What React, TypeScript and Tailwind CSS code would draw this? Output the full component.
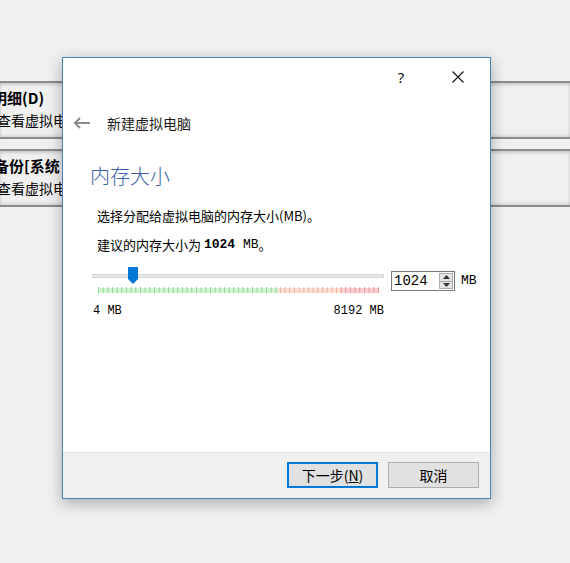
import React from 'react';

const cjk = '"Noto Sans CJK SC", "Noto Sans", sans-serif';
const mono = '"Liberation Mono", "Noto Sans CJK SC", monospace';

function Ticks() {
  const ticks = [];
  const start = 98;
  const end = 378;
  const count = 60;
  for (let i = 0; i <= count; i++) {
    const x = start + ((end - start) * i) / count - 91;
    const color = x + 91 < 278 ? '#8fd68f' : x + 91 < 340 ? '#eeb3a0' : '#e89a9a';
    ticks.push(<line key={i} x1={x + 0.5} y1={22} x2={x + 0.5} y2={28} stroke={color} strokeWidth={1} />);
  }
  return <>{ticks}</>;
}

function MemorySlider() {
  return (
    <svg width="294" height="30" viewBox="0 0 294 30">
      <rect x="1.5" y="9.5" width="291" height="3" fill="#e7e7e7" stroke="#d6d6d6" />
      <rect x="7" y="23" width="180" height="5" fill="#d4f5d4" />
      <rect x="187" y="23" width="62" height="5" fill="#fde0d4" />
      <rect x="249" y="23" width="38" height="5" fill="#fbcfcf" />
      <Ticks />
      <path d="M37 2 H47 V14 L42 19 L37 14 Z" fill="#0078d7" />
    </svg>
  );
}

function BackgroundCard({ title, titleOffset }: { title: string; titleOffset: string }) {
  return (
    <div className="h-[58px] border-y-2 border-[#8c8c8c] bg-[#f0f0f0] shadow-[inset_0_2px_3px_rgba(0,0,0,0.15),inset_0_-2px_3px_rgba(0,0,0,0.1)] overflow-hidden">
      <div className={`mt-[6px] whitespace-nowrap text-[15px] font-bold leading-[18px] text-black ${titleOffset}`} style={{ fontFamily: cjk }}>
        {title}
      </div>
      <div className="mt-[4px] ml-[-3px] whitespace-nowrap text-[14px] leading-[18px] text-black" style={{ fontFamily: cjk }}>
        查看虚拟电
      </div>
    </div>
  );
}

export default function App() {
  return (
    <div className="relative w-[570px] h-[563px] overflow-hidden bg-[#f0f0f0]">
      {/* window behind the dialog */}
      <div className="pt-[81px] flex flex-col gap-[10px]">
        <BackgroundCard title="明细(D)" titleOffset="ml-[-8px]" />
        <BackgroundCard title="备份[系统" titleOffset="ml-[-6px]" />
      </div>

      {/* wizard dialog */}
      <div className="absolute left-[62px] top-[57px] w-[429px] h-[442px] flex flex-col border border-[#4d7fb8] bg-white shadow-[0_4px_14px_rgba(0,0,0,0.3)]" style={{ fontFamily: cjk }}>
        <div className="h-[38px] flex items-center justify-end pr-[9px]">
          <div className="w-[46px] h-[30px] flex items-center justify-center text-[15px] text-black" style={{ fontFamily: '"Open Sans", "Liberation Sans", sans-serif' }}>?</div>
          <div className="ml-[11px] w-[46px] h-[30px] flex items-center justify-center">
            <svg width="12" height="12" viewBox="0 0 12 12">
              <path d="M0.5 0.5 L11.5 11.5 M11.5 0.5 L0.5 11.5" stroke="#111" strokeWidth="1.1" fill="none" />
            </svg>
          </div>
        </div>

        <div className="mt-[15px] h-[24px] flex items-center pl-[10px]">
          <svg width="18" height="12" viewBox="0 0 18 12">
            <path d="M17 6 H2 M7 1 L2 6 L7 11" stroke="#8a8a8a" strokeWidth="2" fill="none" />
          </svg>
          <span className="ml-[16px] text-[14px] text-[#1a1a1a]">新建虚拟电脑</span>
        </div>

        <div className="mt-[27px] h-[28px] pl-[27px] flex items-center text-[20px] font-light text-[#3a5fa6]">内存大小</div>

        <div className="mt-[17px] h-[18px] pl-[34px] flex items-center text-[13px] text-black">选择分配给虚拟电脑的内存大小(MB)。</div>
        <div className="mt-[11px] h-[18px] pl-[34px] flex items-center text-[13px] text-black">
          建议的内存大小为&nbsp;<span className="font-bold" style={{ fontFamily: mono }}>1024</span>
          <span style={{ fontFamily: mono }}>&nbsp;MB</span>。
        </div>

        <div className="mt-[11px] pl-[28px] flex items-start">
          <div className="w-[294px] flex flex-col">
            <MemorySlider />
            <div className="mt-[9px] h-[14px] flex items-center justify-between pl-[2px] pr-[1px] text-[12px] text-black" style={{ fontFamily: mono }}>
              <span>4 MB</span>
              <span>8192 MB</span>
            </div>
          </div>
          <div className="mt-[6px] ml-[6px] w-[64px] h-[20px] flex items-center border border-[#7a7a7a] bg-white">
            <span className="pl-[2px] flex-1 text-[14px] leading-[16px] text-black" style={{ fontFamily: mono }}>1024</span>
            <div className="mr-[1px] w-[14px] h-[16px] flex flex-col border border-[#acacac] bg-[#e5e5e5]">
              <div className="flex-1 flex items-center justify-center border-b border-[#acacac]">
                <svg width="7" height="4" viewBox="0 0 7 4"><path d="M0 4 L3.5 0 L7 4 Z" fill="#333" /></svg>
              </div>
              <div className="flex-1 flex items-center justify-center">
                <svg width="7" height="4" viewBox="0 0 7 4"><path d="M0 0 L3.5 4 L7 0 Z" fill="#333" /></svg>
              </div>
            </div>
          </div>
          <span className="mt-[8px] ml-[6px] text-[13px] leading-[16px] text-black" style={{ fontFamily: mono }}>MB</span>
        </div>

        <div className="mt-auto h-[46px] flex items-start justify-end gap-[10px] pt-[9px] pr-[11px] border-t border-[#e3e3e3] bg-[#f0f0f0]">
          <button className="w-[91px] h-[26px] flex items-center justify-center border-2 border-[#0078d7] bg-[#e1e1e1] text-[14px] text-black">下一步(<span className="underline">N</span>)</button>
          <button className="w-[91px] h-[26px] flex items-center justify-center border border-[#adadad] bg-[#e1e1e1] text-[14px] text-black">取消</button>
        </div>
      </div>
    </div>
  );
}
